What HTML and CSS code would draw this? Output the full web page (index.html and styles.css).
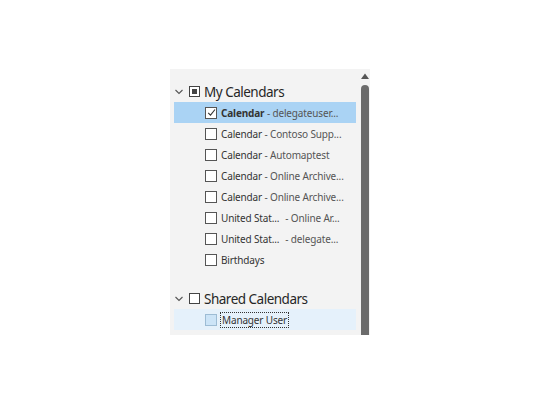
FILE: index.html
```html
<!DOCTYPE html>
<html>
<head>
<meta charset="utf-8">
<link rel="stylesheet" href="styles.css">
</head>
<body>
<div class="panel">
  <div class="list">
    <div class="group-head">
      <svg class="chev" width="8" height="6" viewBox="0 0 8 6"><path d="M0.5 1 L4 4.5 L7.5 1" fill="none" stroke="#555" stroke-width="1.1"/></svg>
      <span class="gbox partial"><span class="fill"></span></span>
      <span class="gtitle">My Calendars</span>
    </div>
    <div class="row selected">
      <span class="box checked"><svg width="9" height="9" viewBox="0 0 9 9"><path d="M1.2 4.8 L3.5 7.2 L8 1.5" fill="none" stroke="#333" stroke-width="1.1"/></svg></span>
      <span class="name bold">Calendar</span><span class="sub">&nbsp;- delegateuser...</span>
    </div>
    <div class="row"><span class="box"></span><span class="name">Calendar</span><span class="sub">&nbsp;- Contoso Supp...</span></div>
    <div class="row"><span class="box"></span><span class="name">Calendar</span><span class="sub">&nbsp;- Automaptest</span></div>
    <div class="row"><span class="box"></span><span class="name">Calendar</span><span class="sub">&nbsp;- Online Archive...</span></div>
    <div class="row"><span class="box"></span><span class="name">Calendar</span><span class="sub">&nbsp;- Online Archive...</span></div>
    <div class="row"><span class="box"></span><span class="name">United Stat...</span><span class="sub gap">- Online Ar...</span></div>
    <div class="row"><span class="box"></span><span class="name">United Stat...</span><span class="sub gap">- delegate...</span></div>
    <div class="row"><span class="box"></span><span class="name">Birthdays</span></div>
    <div class="group-head second">
      <svg class="chev" width="8" height="6" viewBox="0 0 8 6"><path d="M0.5 1 L4 4.5 L7.5 1" fill="none" stroke="#555" stroke-width="1.1"/></svg>
      <span class="gbox"></span>
      <span class="gtitle">Shared Calendars</span>
    </div>
    <div class="row hover"><span class="box blue"></span><span class="name focus">Manager User</span></div>
  </div>
  <div class="scroll">
    <svg class="arrow" width="8" height="6" viewBox="0 0 8 6"><path d="M0 6 L4 0.5 L8 6 Z" fill="#555"/></svg>
    <div class="thumb"></div>
  </div>
</div>
</body>
</html>
```
FILE: styles.css
```css
html, body { margin: 0; padding: 0; background: #fff; }
body { font-family: "Noto Sans", "Open Sans", sans-serif; }
.panel {
  margin: 69px 0 0 170px;
  width: 200px;
  height: 266px;
  background: #f3f3f3;
  display: flex;
  overflow: hidden;
}
.list {
  flex: 1;
  padding: 12px 4px 0 4px;
}
.group-head {
  height: 21px;
  display: flex;
  align-items: center;
  color: #262626;
}
.group-head.second { margin-top: 18px; }
.chev { margin-left: 1px; margin-right: 6px; }
.gbox {
  width: 9px; height: 9px;
  border: 1px solid #444;
  background: #fff;
  display: flex; align-items: center; justify-content: center;
  margin-right: 4px;
}
.gbox .fill { width: 5px; height: 5px; background: #444; }
.gtitle { font-size: 13.5px; letter-spacing: -0.5px; }
.row {
  height: 21px;
  display: flex;
  align-items: center;
  font-size: 10px;
  letter-spacing: -0.15px;
  white-space: nowrap;
  padding-left: 31px;
}
.row.selected { background: #aad3f4; }
.row.hover { background: #e5f1fb; }
.box {
  width: 10px; height: 10px;
  border: 1px solid #555;
  background: #fff;
  margin-right: 4px;
  flex: none;
  display: flex; align-items: center; justify-content: center;
}
.box.blue { background: #cce4f7; border-color: #9dbcd4; }
.name { color: #333; }
.name.bold { font-weight: bold; }
.sub { color: #555; }
.sub.gap { margin-left: 6px; }
.focus { outline: 1px dotted #333; outline-offset: 0; padding: 0 1px; }
.scroll {
  width: 9px;
  margin-right: 1px;
  display: flex;
  flex-direction: column;
  align-items: center;
}
.arrow { margin-top: 4px; }
.thumb {
  margin-top: 6px;
  width: 8px;
  flex: 1;
  background: #6b6b6b;
  border-radius: 4px 4px 0 0;
}
```
